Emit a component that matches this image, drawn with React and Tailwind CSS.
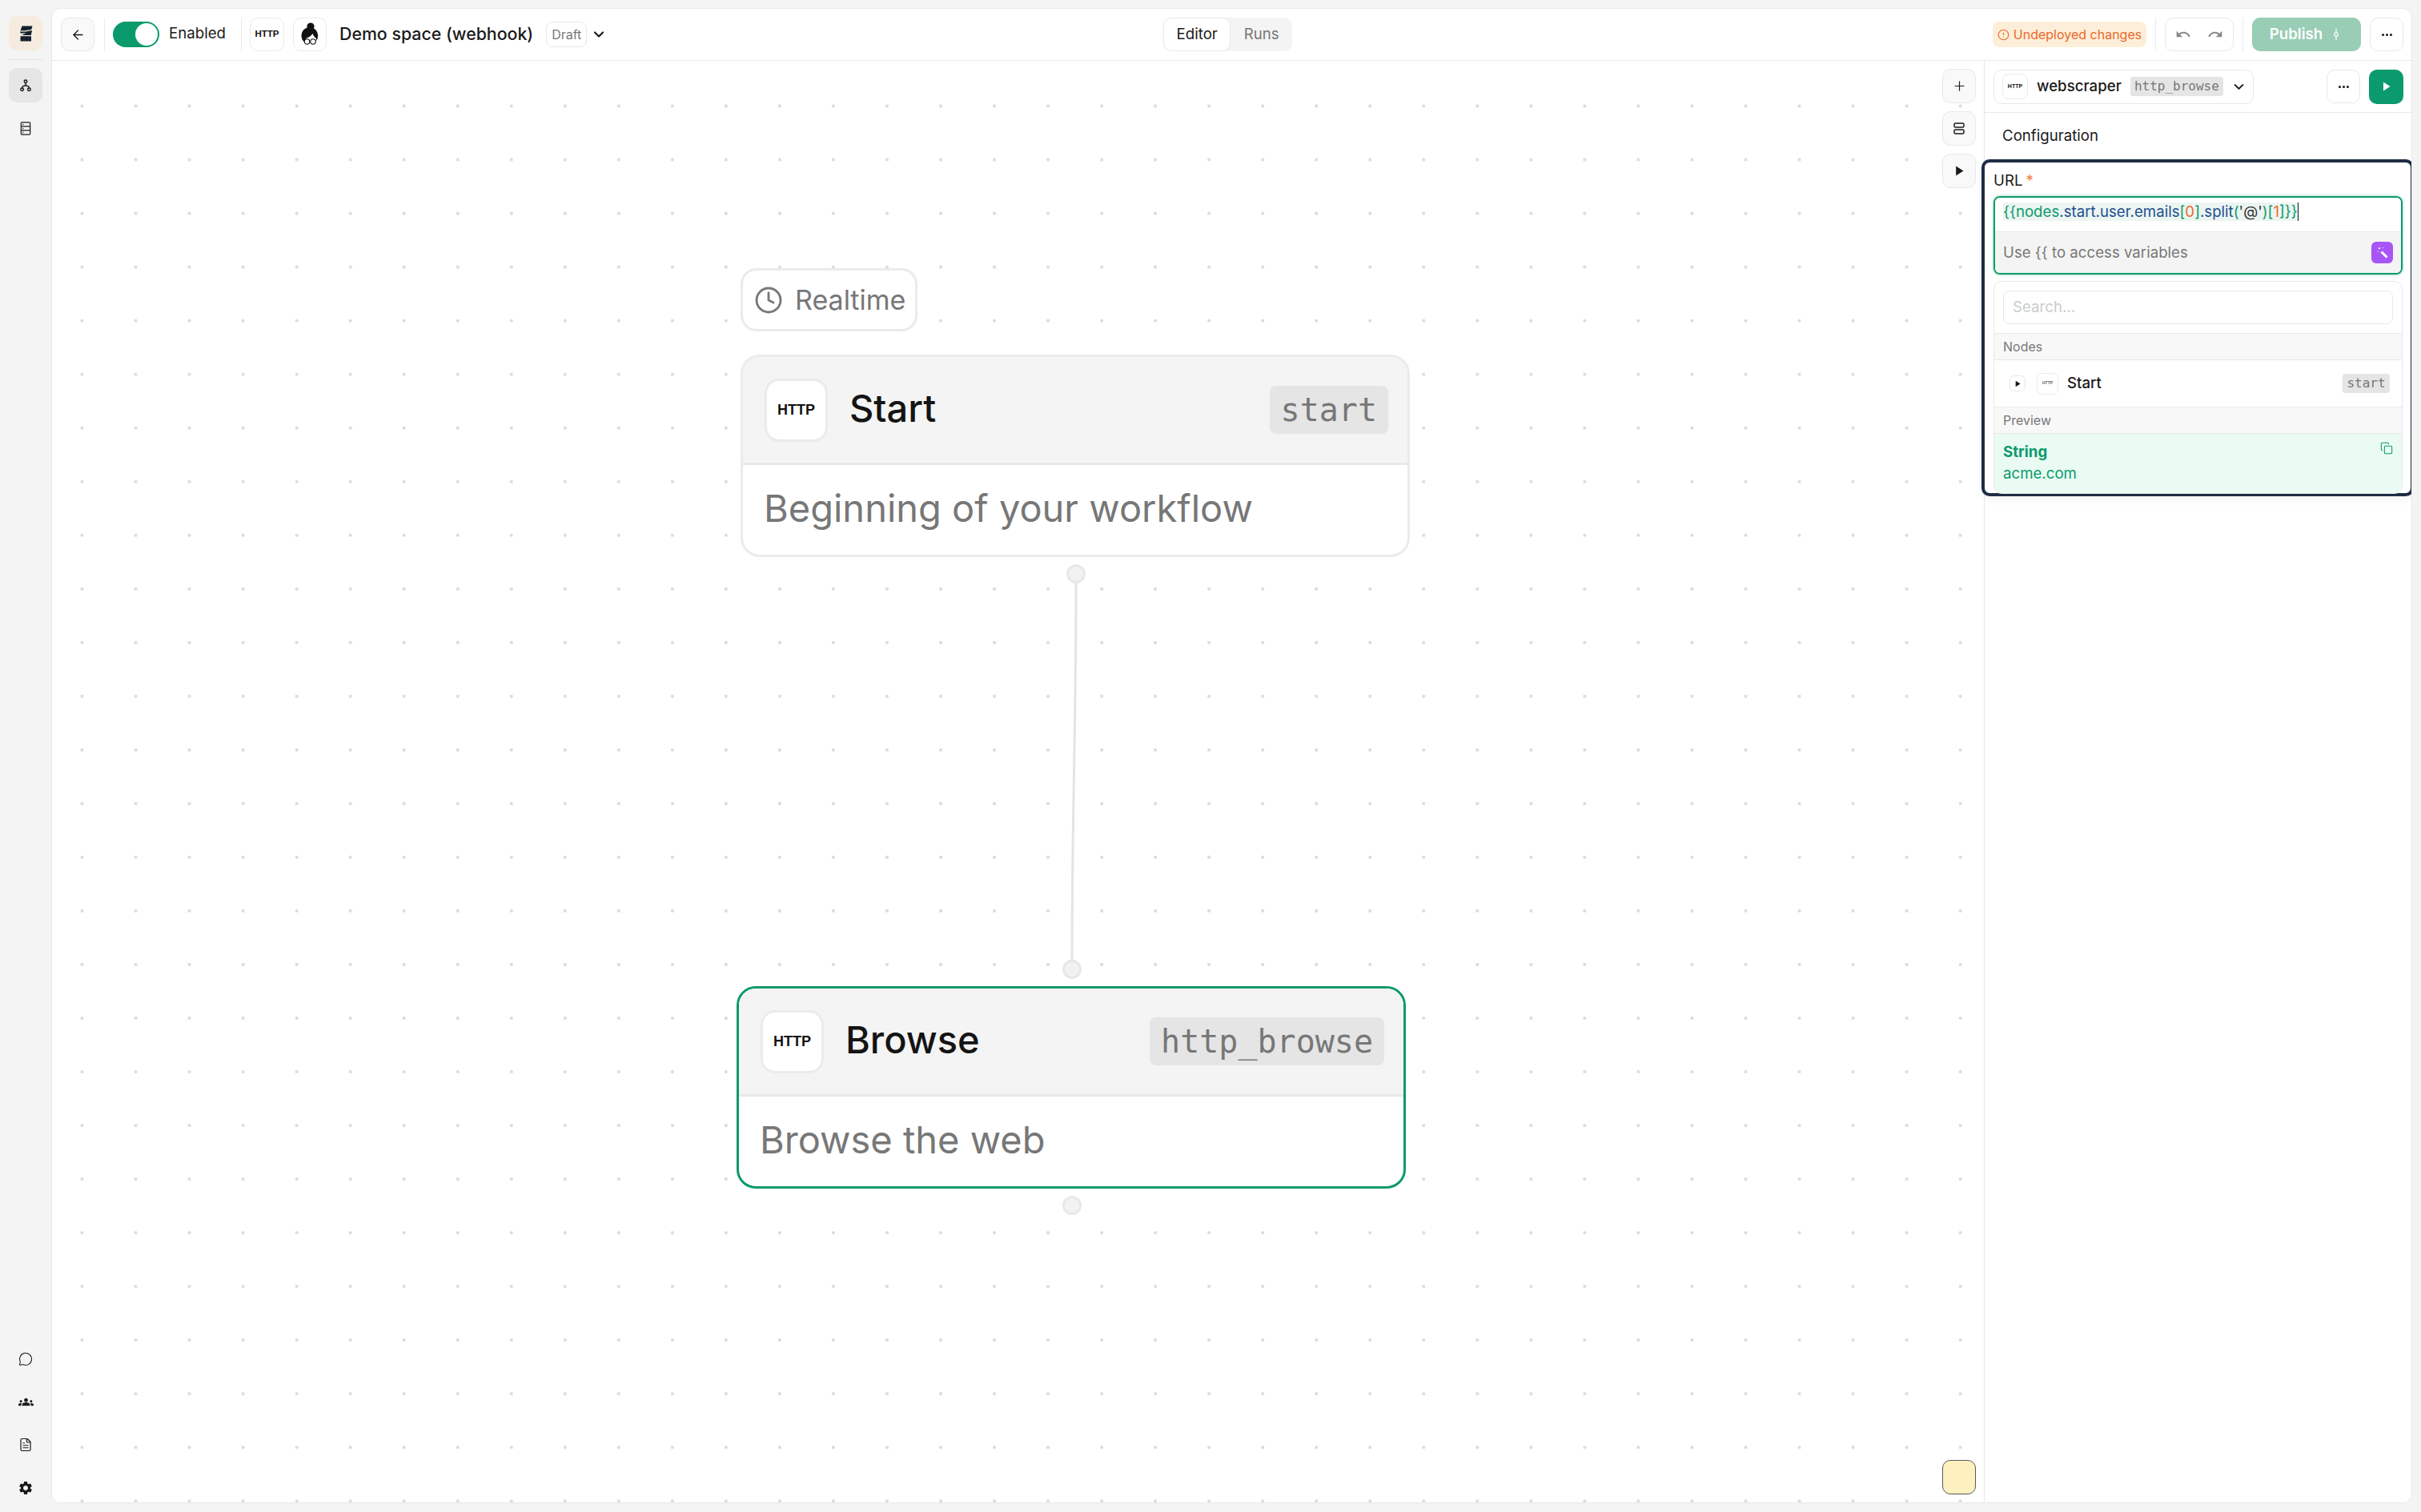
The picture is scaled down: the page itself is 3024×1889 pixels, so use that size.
import React from 'react';
import {
  ArrowLeft, ChevronDown, CircleAlert, Clock, Copy, Ellipsis, FileText,
  GitCommitVertical, MessageCircle, Plus,
} from 'lucide-react';
import { MdGroups, MdRedo, MdSettings, MdUndo } from 'react-icons/md';

const sans = { fontFamily: 'Inter, sans-serif' };
const mono = { fontFamily: '"DejaVu Sans Mono", monospace' };

const Play = ({ className }) => (
  <svg viewBox="0 0 10 12" className={className} fill="currentColor">
    <path d="M1 0.5 L9.5 6 L1 11.5 Z" />
  </svg>
);

const Logo = () => (
  <svg viewBox="0 0 17 20" className="w-[17px] h-[20px]" fill="#16202e">
    <path d="M3.5 0.5 H16.5 L15.2 5 L7 6.2 H1.5 Z" />
    <path d="M1 7.5 H8 L16 6 L14.8 12 H3 L8.5 9.5 H1.6 Z" />
    <path d="M1.5 13.2 H15 V19.5 H1.5 Z" />
  </svg>
);

const WorkflowIcon = () => (
  <svg viewBox="0 0 16 18" className="w-[14px] h-[16px]" fill="none" stroke="#1a1a1a" strokeWidth="1.7">
    <circle cx="8" cy="3" r="2" />
    <circle cx="3" cy="14.5" r="2" />
    <circle cx="13" cy="14.5" r="2" />
    <path d="M8 5 V9 M8 9 C4 9 3 10 3 12.5 M8 9 C12 9 13 10 13 12.5" />
  </svg>
);

const TableIcon = () => (
  <svg viewBox="0 0 14 18" className="w-[14px] h-[17px]" fill="none" stroke="#1a1a1a" strokeWidth="1.3">
    <rect x="1" y="1" width="12" height="16" rx="1" />
    <path d="M1 6.3 H13 M1 11.6 H13" />
    <path d="M3 3.7 H4.2 M3 9 H4.2 M3 14.3 H4.2" strokeWidth="1.4" />
  </svg>
);

const StackIcon = () => (
  <svg viewBox="0 0 14 15" className="w-[14px] h-[15px]" fill="none" stroke="#1a1a1a" strokeWidth="1.5">
    <rect x="1" y="1" width="12" height="5" rx="1.6" />
    <rect x="1" y="9" width="12" height="5" rx="1.6" />
  </svg>
);

const WandIcon = () => (
  <svg viewBox="0 0 18 18" className="w-[18px] h-[18px]" fill="none" stroke="#fff">
    <path d="M7.5 7.5 L14.5 14.5" strokeWidth="3" />
    <path d="M5 2 V4.4 M3.8 3.2 H6.2 M2.4 7.2 H3.6 M9 2.6 H10.2" strokeWidth="1" />
  </svg>
);

const Avatar = () => (
  <svg viewBox="0 0 24 30" className="w-[24px] h-[30px]">
    <circle cx="13" cy="5" r="4.6" fill="#111" />
    <ellipse cx="11.8" cy="16.5" rx="10.4" ry="10.5" fill="#111" />
    <path d="M7 20 C10 19 14 17 15.5 14 C16.5 17 18.5 19 20 20 C20 25 16 28 13 28 C10 28 7 25 7 20 Z" fill="#fff" />
    <circle cx="8.5" cy="24" r="3.2" fill="#fff" stroke="#111" strokeWidth="1.1" />
    <circle cx="16" cy="24" r="3.2" fill="#fff" stroke="#111" strokeWidth="1.1" />
  </svg>
);

const HttpBox = ({ className, textClass }) => (
  <div className={`flex items-center justify-center bg-white border border-[#ebebeb] ${className}`}>
    <span className={`font-bold text-[#111] ${textClass}`} style={{ fontFamily: '"Liberation Sans", sans-serif' }}>HTTP</span>
  </div>
);

const IconButton = ({ children, className = '' }) => (
  <div className={`w-[42px] h-[42px] flex items-center justify-center rounded-[10px] border border-[#e8e8e8] ${className}`}>
    {children}
  </div>
);

const Divider = () => <div className="w-px h-[42px] bg-[#ebebeb]" />;

const Sidebar = () => (
  <div className="w-[64px] shrink-0 flex flex-col items-center pt-[20px] pb-[20px]">
    <div className="w-[42px] h-[43px] rounded-[10px] bg-[#f5ecdf] flex items-center justify-center"><Logo /></div>
    <div className="w-[42px] h-px bg-[#e3e3e3] mt-[11px]" />
    <div className="w-[42px] h-[43px] rounded-[10px] bg-[#e6e6e6] mt-[10px] flex items-center justify-center"><WorkflowIcon /></div>
    <div className="w-[42px] h-[43px] mt-[11px] flex items-center justify-center"><TableIcon /></div>
    <div className="mt-auto flex flex-col items-center gap-[35px] text-[#1a1a1a]">
      <MessageCircle className="w-[18px] h-[18px]" strokeWidth={1.4} />
      <MdGroups className="w-[19px] h-[19px]" />
      <FileText className="w-[18px] h-[18px]" strokeWidth={1.6} />
      <MdSettings className="w-[20px] h-[20px]" />
    </div>
  </div>
);

const TopBar = () => (
  <div className="h-[65px] shrink-0 border-b border-[#e8e8e8] flex items-center pl-[11px] pr-[10px]">
    <IconButton className="bg-[#f9f9f9]"><ArrowLeft className="w-[19px] h-[19px] text-[#1a1a1a]" strokeWidth={1.6} /></IconButton>
    <div className="ml-[12px]"><Divider /></div>
    <div className="ml-[10px] w-[58px] h-[32px] rounded-full bg-[#0b9a6b] flex items-center justify-end pr-[2px]">
      <div className="w-[28px] h-[28px] rounded-full bg-white" />
    </div>
    <span className="ml-[12px] w-[71px] text-[18.67px] text-[#1a1a1a] whitespace-nowrap mb-[2px]">Enabled</span>
    <div className="ml-[19px]"><Divider /></div>
    <HttpBox className="ml-[10px] w-[43px] h-[42px] rounded-[10px]" textClass="text-[11.5px]" />
    <div className="ml-[11px] w-[42px] h-[42px] rounded-[10px] border border-[#ebebeb] flex items-center justify-center"><Avatar /></div>
    <span className="ml-[16px] text-[21.33px] font-medium text-[#1a1a1a] mb-[1px]">Demo space (webhook)</span>
    <div className="ml-[16px] w-[51px] h-[32px] rounded-[8px] border border-[#e8e8e8] flex items-center justify-center text-[16px] text-[#777]">Draft</div>
    <ChevronDown className="ml-[5px] w-[20px] h-[20px] text-[#1a1a1a]" strokeWidth={2.6} />

    <div className="ml-[695px] flex h-[42px] rounded-[10px] bg-[#f4f4f4]">
      <div className="w-[84px] rounded-[10px] border border-[#e8e8e8] bg-white flex items-center justify-center text-[18.67px] text-[#1a1a1a]">Editor</div>
      <div className="w-[77px] flex items-center justify-center text-[18.67px] text-[#777]">Runs</div>
    </div>

    <div className="ml-auto h-[32px] w-[192px] rounded-[8px] bg-[#fdeed9] flex items-center justify-center gap-[5px] text-[#ea6a2c]">
      <CircleAlert className="w-[15px] h-[15px]" strokeWidth={1.8} />
      <span className="text-[16px]">Undeployed changes</span>
    </div>
    <div className="ml-[11px]"><Divider /></div>
    <div className="ml-[11px] w-[86px] h-[42px] rounded-[10px] border border-[#e8e8e8] flex items-center justify-between px-[12px] text-[#8a8a8a]">
      <MdUndo className="w-[20px] h-[20px]" />
      <MdRedo className="w-[20px] h-[20px]" />
    </div>
    <div className="ml-[11px]"><Divider /></div>
    <div className="ml-[11px] w-[136px] h-[42px] rounded-[10px] bg-[#99cdb5] flex items-center justify-center gap-[8px] text-white">
      <span className="text-[18.67px] font-semibold">Publish</span>
      <GitCommitVertical className="w-[18px] h-[18px]" strokeWidth={1.6} />
    </div>
    <IconButton className="ml-[11px]"><Ellipsis className="w-[17px] h-[17px] text-[#1a1a1a]" strokeWidth={2.4} /></IconButton>
  </div>
);

// nodes sit on a free canvas, so these are placed by coordinates
const Node = ({ title, slug, desc, selected, className }) => (
  <div className={`absolute w-[836px] h-[253px] rounded-[24px] bg-white overflow-hidden border-[3px] ${selected ? 'border-[#0b9a6b]' : 'border-[#ebebeb]'} ${className}`}>
    <div className="h-[135px] bg-[#f4f4f4] border-b-[3px] border-[#e8e8e8] flex items-center pl-[27px] pr-[24px]">
      <HttpBox className="w-[79px] h-[79px] rounded-[18px] !border-[3px]" textClass="text-[18px]" />
      <span className="ml-[27px] mb-[4px] text-[47px] font-medium text-[#141414]">{title}</span>
      <span className="ml-auto h-[60px] px-[14px] rounded-[8px] bg-[#e5e5e5] flex items-center text-[40px] text-[#777]" style={mono}>{slug}</span>
    </div>
    <div className="pl-[26px] pt-[24px] text-[47px] leading-[60px] text-[#777]">{desc}</div>
  </div>
);

const Handle = ({ className }) => (
  <div className={`absolute w-[24px] h-[24px] rounded-full bg-[#f2f2f2] border-[3px] border-[#e8e8e8] ${className}`} />
);

const Canvas = () => (
  <div className="relative flex-1 overflow-hidden bg-white bg-[radial-gradient(circle,#d9dddb_1.6px,transparent_2.4px)] bg-[size:67.04px_67.04px] bg-[position:4px_23px]">
    <div className="absolute left-[860px] top-[259px] w-[221px] h-[79px] rounded-[20px] bg-white border-[3px] border-[#ebebeb] flex items-center pl-[14px] gap-[15px] text-[#777]">
      <Clock className="w-[36px] h-[36px]" strokeWidth={1.9} />
      <span className="text-[34px]">Realtime</span>
    </div>
    <Node className="left-[860px] top-[367px]" title="Start" slug="start" desc="Beginning of your workflow" />
    <svg className="absolute left-[1240px] top-[640px]" width="60" height="500" fill="none">
      <path d="M39 10 C39 200 34 300 34 490" stroke="#e4e4e4" strokeWidth="3" />
    </svg>
    <Handle className="left-[1267px] top-[629px]" />
    <Handle className="left-[1262px] top-[1123px]" />
    <Node className="left-[855px] top-[1156px]" selected title="Browse" slug="http_browse" desc="Browse the web" />
    <Handle className="left-[1262px] top-[1418px]" />

    <div className="absolute left-[2361px] top-[10px] flex flex-col gap-[10px] text-[#1a1a1a]">
      <IconButton className="bg-[#f9f9f9] !h-[43px]"><Plus className="w-[19px] h-[19px]" strokeWidth={1.5} /></IconButton>
      <IconButton className="bg-[#f9f9f9] !h-[43px]"><StackIcon /></IconButton>
      <IconButton className="bg-[#f9f9f9] !h-[43px]"><Play className="w-[11px] h-[13px]" /></IconButton>
    </div>
    <div className="absolute left-[2361px] top-[1748px] w-[42px] h-[43px] rounded-[10px] bg-[#fdf1c0] border border-[#5a5a5a]" />
  </div>
);

const CodeLine = () => (
  <span className="bg-[#ecf5f1] text-[18.67px] leading-[23px] border-r border-[#111]">
    <span className="text-[#0b9a6b]">{'{{'}</span>
    <span className="text-[#0b9a6b]">nodes</span>
    <span className="text-[#1d4f91]">.start.user.emails</span>
    <span className="text-[#0b9a6b]">[</span>
    <span className="text-[#ea6a2c]">0</span>
    <span className="text-[#0b9a6b]">]</span>
    <span className="text-[#1d4f91]">.split</span>
    <span className="text-[#0b9a6b]">(</span>
    <span className="text-[#333]">'@'</span>
    <span className="text-[#0b9a6b]">)[</span>
    <span className="text-[#ea6a2c]">1</span>
    <span className="text-[#0b9a6b]">]{'}}'}</span>
  </span>
);

const Panel = () => (
  <div className="w-[534px] shrink-0 relative border-l border-[#e8e8e8] bg-white">
    <div className="h-[65px] border-b border-[#e8e8e8] flex items-center pl-[11px] pr-[10px]">
      <div className="w-[325px] h-[43px] rounded-[10px] border border-[#e8e8e8] flex items-center pl-[10px]">
        <HttpBox className="w-[32px] h-[32px] rounded-[8px]" textClass="text-[7px]" />
        <span className="ml-[11px] text-[18.67px] font-medium text-[#1a1a1a]">webscraper</span>
        <span className="ml-[11px] w-[116px] h-[24px] rounded-[3px] bg-[#e5e5e5] flex items-center justify-center text-[16px] text-[#777]" style={mono}>http_browse</span>
        <ChevronDown className="ml-[10px] w-[19px] h-[19px] text-[#1a1a1a]" strokeWidth={2.6} />
      </div>
      <IconButton className="ml-auto"><Ellipsis className="w-[17px] h-[17px] text-[#1a1a1a]" strokeWidth={2.4} /></IconButton>
      <div className="ml-[11px] w-[43px] h-[43px] rounded-[10px] bg-[#0b9a6b] flex items-center justify-center text-white"><Play className="w-[10px] h-[12px]" /></div>
    </div>
    <div className="pl-[22px] pt-[17px] text-[18.67px] leading-[24px] text-[#1a1a1a]">Configuration</div>

    <div className="absolute left-[-4px] top-[123px] w-[540px] h-[421px] rounded-[10px] border-4 border-[#1e2d45] bg-white pl-[11px] pr-[10px] pt-[8px] shadow-[0_4px_12px_rgba(0,0,0,0.05)]">
      <div className="h-[30px] flex items-center text-[18.67px] text-[#1a1a1a]">
        URL<span className="ml-[4px] text-[#f47a3a]">*</span>
      </div>
      <div className="mt-[4px] h-[98px] rounded-[8px] border-2 border-[#0b9a6b] overflow-hidden ring-2 ring-[#0b9a6b]/15">
        <div className="h-[42px] bg-white flex items-center pl-[10px] pb-[8px]"><CodeLine /></div>
        <div className="h-[52px] bg-[#f4f4f4] border-t border-[#e8e8e8] flex items-center pl-[10px] pr-[10px]">
          <span className="text-[18.67px] text-[#777]">Use {'{{'} to access variables</span>
          <div className="ml-auto w-[27px] h-[27px] rounded-[6px] bg-[#a855f7] flex items-center justify-center"><WandIcon /></div>
        </div>
      </div>
      <div className="mt-[8px] h-[266px] rounded-[10px] border border-[#e8e8e8] overflow-hidden">
        <div className="h-[64px] flex items-center px-[11px]">
          <div className="w-full h-[42px] rounded-[8px] border border-[#e8e8e8] flex items-center pl-[11px] text-[18.67px] text-[#c9cdcb]">Search...</div>
        </div>
        <div className="h-[34px] bg-[#f8f8f8] border-y border-[#e8e8e8] flex items-center pl-[11px] text-[16px] text-[#777]">Nodes</div>
        <div className="h-[58px] flex items-center pl-[19px] pr-[15px]">
          <div className="w-[20px] h-[20px] rounded-[6px] border border-[#e8e8e8] flex items-center justify-center text-[#1a1a1a]"><Play className="w-[7px] h-[9px]" /></div>
          <HttpBox className="ml-[14px] w-[27px] h-[27px] rounded-[7px]" textClass="text-[5px] !text-[#666]" />
          <span className="ml-[11px] text-[18.67px] font-medium text-[#1a1a1a]">Start</span>
          <span className="ml-auto w-[59px] h-[24px] rounded-[3px] bg-[#e5e5e5] flex items-center justify-center text-[16px] text-[#777]" style={mono}>start</span>
        </div>
        <div className="h-[34px] bg-[#f8f8f8] border-y border-[#e8e8e8] flex items-center pl-[11px] text-[16px] text-[#777]">Preview</div>
        <div className="relative h-[76px] bg-[#e9fbf3] pl-[11px] pt-[11px] text-[#0b9a6b]">
          <div className="text-[18.67px] leading-[24px] font-bold">String</div>
          <div className="mt-[3px] text-[18.67px] leading-[24px]">acme.com</div>
          <Copy className="absolute right-[11px] top-[10px] w-[16px] h-[16px]" strokeWidth={1.6} />
        </div>
      </div>
    </div>
  </div>
);

const App = () => (
  <div className="flex w-full h-screen bg-[#f4f4f4] overflow-hidden" style={sans}>
    <Sidebar />
    <div className="flex-1 min-w-0 flex flex-col mt-[10px] mb-[11px] mr-[11px] rounded-[12px] border border-[#e8e8e8] bg-white overflow-hidden">
      <TopBar />
      <div className="flex flex-1 min-h-0 overflow-hidden">
        <Canvas />
        <Panel />
      </div>
    </div>
  </div>
);

export default App;
